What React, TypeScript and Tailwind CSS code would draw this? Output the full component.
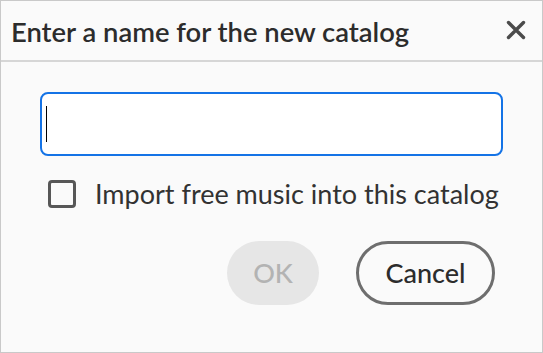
export default function App() {
  return (
    <div
      className="w-[543px] h-[353px] flex flex-col bg-[#fafafa] border border-[#c9c9c9] text-[#2c2c2c]"
      style={{ fontFamily: 'Lato, "Noto Sans", sans-serif' }}
    >
      {/* title bar */}
      <div className="h-[61px] flex items-start justify-between pl-[10px] pr-[15px] pt-[15px] border-b-2 border-[#d6d6d6]">
        <h1 className="text-[27.4px] leading-[1.2] font-semibold whitespace-nowrap">Enter a name for the new catalog</h1>
        <button aria-label="Close" className="mt-[3px] w-[22px] h-[22px] flex items-center justify-center text-[#4b4b4b]">
          <svg width="20" height="20" viewBox="0 0 20 20" fill="none" stroke="currentColor" strokeWidth="3.4" strokeLinecap="round">
            <path d="M2.5 2.5 L17.5 17.5 M17.5 2.5 L2.5 17.5" />
          </svg>
        </button>
      </div>

      <div className="flex flex-col px-[39px] pt-[30px]">
        <div className="h-[64px] rounded-[8px] border-2 border-[#1473e6] bg-white flex items-center pl-[4px]">
          <span className="block w-px h-[36px] bg-black" />
        </div>

        <label className="mt-[24px] ml-[8px] h-[28px] flex items-center gap-[19px]">
          <span className="w-[28px] h-[28px] shrink-0 rounded-[4px] border-[3px] border-[#575757] bg-[#fafafa]" />
          <span className="text-[27px] leading-[1.2] whitespace-nowrap text-[#323232]">Import free music into this catalog</span>
        </label>

        <div className="mt-[33px] mr-[8px] flex justify-end gap-[37px]">
          <button
            disabled
            className="w-[92px] h-[64px] rounded-full bg-[#e6e6e6] text-[#b3b3b3] text-[27px] leading-[1.2] font-medium flex items-center justify-center"
          >
            OK
          </button>
          <button className="w-[139px] h-[64px] rounded-full border-[3px] border-[#6e6e6e] bg-[#fafafa] text-[#2c2c2c] text-[27px] leading-[1.2] font-medium flex items-center justify-center">
            Cancel
          </button>
        </div>
      </div>
    </div>
  );
}
